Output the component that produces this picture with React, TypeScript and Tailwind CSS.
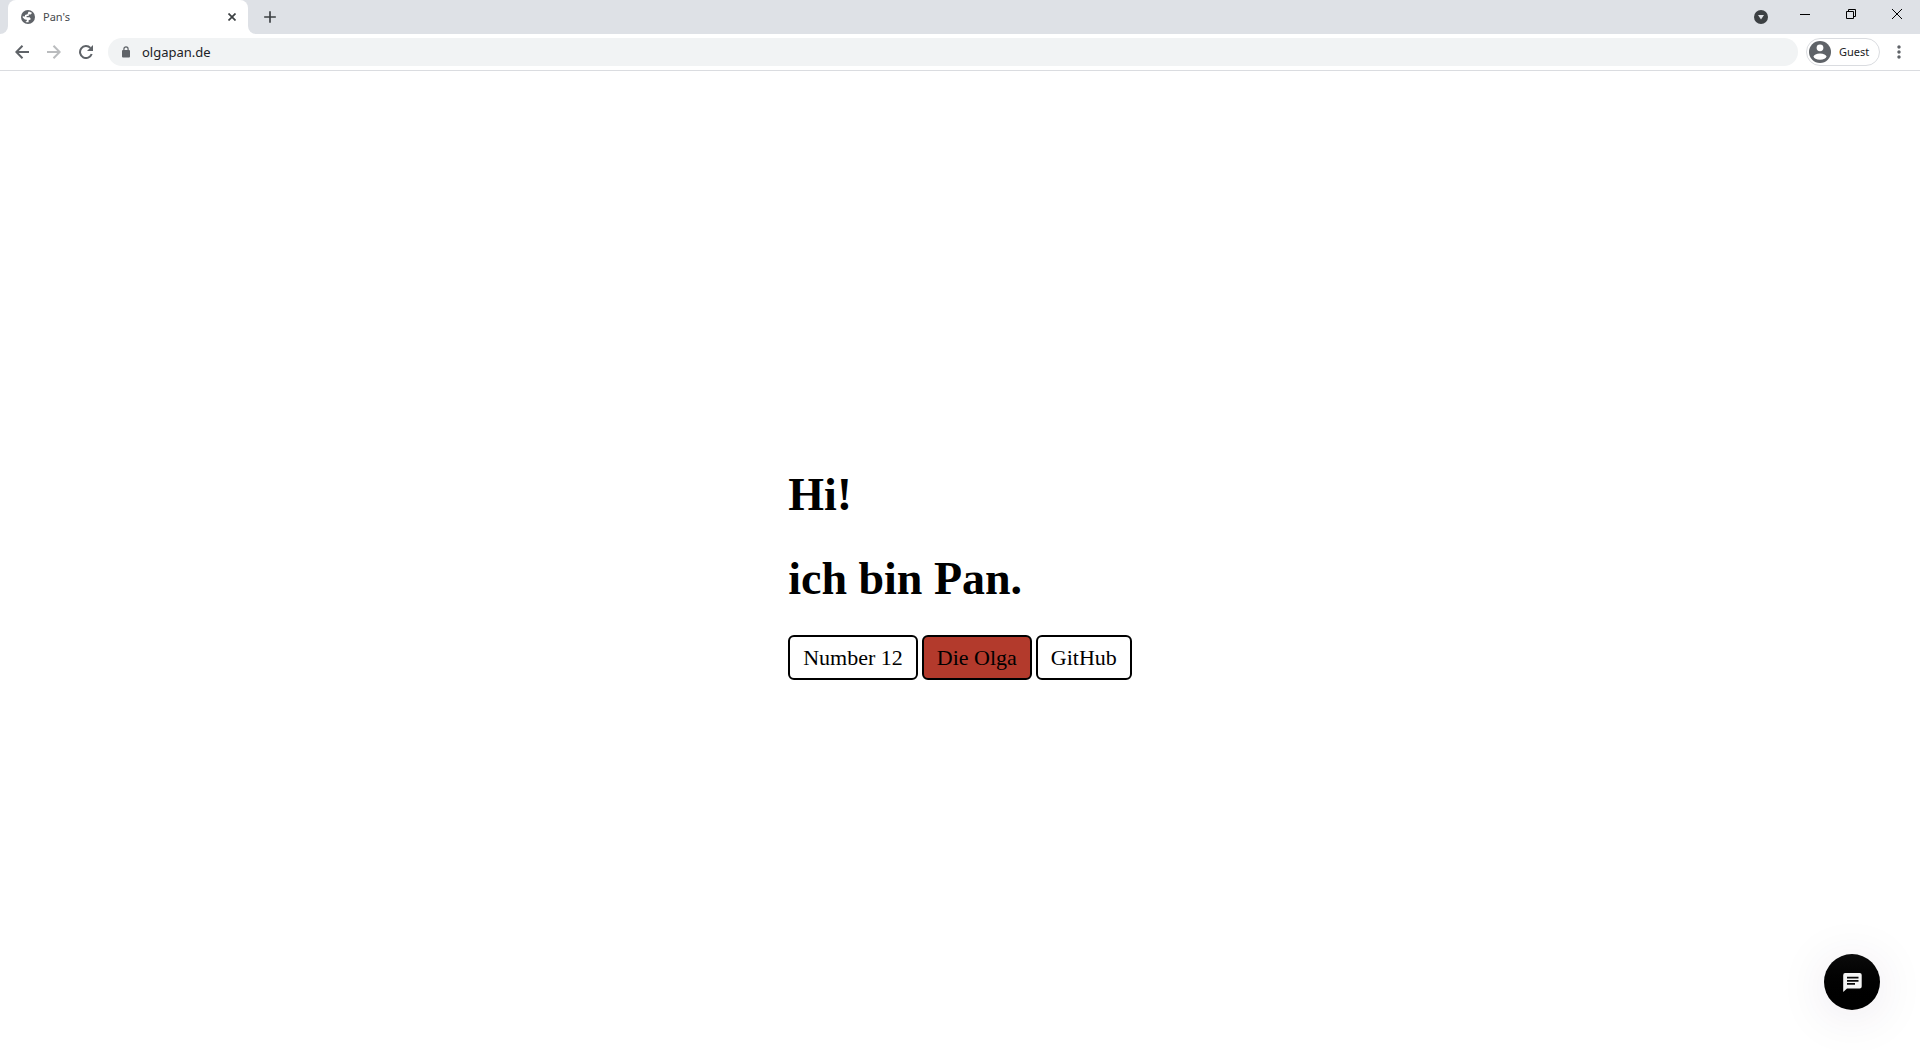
import React from "react";
import { MdAdd, MdMoreVert } from "react-icons/md";

function GlobeIcon() {
  return (
    <svg width="14" height="14" viewBox="0 0 14 14">
      <circle cx="7" cy="7" r="7" fill="#5f6368" />
      <path
        d="M7.4 1.7C9 1.6 10.3 2.3 11 3.1L9.6 4.6H7.7V6H5.6V7.2H8.6L9.6 8.4V9.6L7.6 10.2V12.2C6.4 12.5 5.2 12.2 4.4 11.7L5.8 11V9.8L3.9 9.5 1.7 7.4V6.2L4 6.6V5L6.6 4.2z"
        fill="white"
      />
    </svg>
  );
}

function AvatarIcon() {
  return (
    <svg width="22" height="22" viewBox="0 0 22 22">
      <circle cx="11" cy="11" r="11" fill="#5f6368" />
      <circle cx="11" cy="6.8" r="3.4" fill="white" />
      <ellipse cx="11" cy="15.6" rx="6.4" ry="3.1" fill="white" />
    </svg>
  );
}

function LockIcon() {
  return (
    <svg width="8" height="12" viewBox="0 0 8 12">
      <path d="M1.9 5V3a2.1 2.1 0 0 1 4.2 0v2" fill="none" stroke="#5f6368" strokeWidth="1.2" />
      <rect y="4" width="8" height="7.5" rx="1" fill="#5f6368" />
    </svg>
  );
}

function ArrowIcon({ forward = false }: { forward?: boolean }) {
  return (
    <svg width="14" height="14" viewBox="0 0 14 14" fill="none" stroke="currentColor" strokeWidth="2">
      <path d={forward ? "M0 7h12.5M6.5.7L12.7 7l-6.2 6.3" : "M14 7H1.5M7.5.7L1.3 7l6.2 6.3"} />
    </svg>
  );
}

function ReloadIcon() {
  return (
    <svg width="14" height="14" viewBox="0 0 14 14">
      <path d="M12.7 9A6 6 0 1 1 11.4 2.9" fill="none" stroke="currentColor" strokeWidth="2" />
      <path d="M14 0v6H8z" fill="currentColor" />
    </svg>
  );
}

function ChatIcon() {
  return (
    <svg width="19" height="19" viewBox="0 0 19 19">
      <path d="M2.5 0h14.2A2 2 0 0 1 18.7 2v11.5a2 2 0 0 1-2 2H4L.2 19V2.2A2.2 2.2 0 0 1 2.5 0z" fill="#f5f5f5" />
      <path d="M4 4.7h11.5M4 7.8h11.5M4 10.9h8" stroke="#0a0a0a" strokeWidth="1.7" />
    </svg>
  );
}

function TabStrip() {
  return (
    <div className="flex h-[34px] bg-white">
      <div className="w-2 rounded-br-lg bg-[#dee1e6]" />
      <div className="flex w-60 bg-[#dee1e6]">
        <div className="flex flex-1 items-center rounded-t-lg bg-white pr-1.5 pl-[13px]">
          <GlobeIcon />
          <span className="ml-2 flex-1 text-[11px] text-[#45494d]">Pan's</span>
          <button aria-label="Close tab" className="flex size-5 items-center justify-center text-[#3c4043]">
            <svg width="8" height="8" viewBox="0 0 8 8" stroke="currentColor" strokeWidth="1.7">
              <path d="M.5.5l7 7M7.5.5l-7 7" />
            </svg>
          </button>
        </div>
      </div>
      <div className="flex flex-1 items-center rounded-bl-lg bg-[#dee1e6] pl-2">
        <button aria-label="New tab" className="flex size-7 items-center justify-center text-[#3c4043]">
          <MdAdd size={20} />
        </button>
        <div className="flex-1" />
        <button aria-label="Search tabs" className="mr-[7px] flex size-7 items-center justify-center">
          <svg width="14" height="14" viewBox="0 0 14 14">
            <circle cx="7" cy="7" r="7" fill="#3c4043" />
            <path d="M4 5h6L7 9.5z" fill="#dee1e6" />
          </svg>
        </button>
        <div className="flex self-start text-black">
          <button aria-label="Minimize" className="flex h-7 w-[46px] items-center justify-center">
            <svg width="10" height="10" viewBox="0 0 10 10">
              <path d="M0 5.5h10" stroke="currentColor" />
            </svg>
          </button>
          <button aria-label="Restore" className="flex h-7 w-[46px] items-center justify-center">
            <svg width="10" height="10" viewBox="0 0 10 10" fill="none" stroke="currentColor">
              <path d="M.5 2.5h7v7h-7zM2.5 2.5v-2h7v7h-2" />
            </svg>
          </button>
          <button aria-label="Close window" className="flex h-7 w-[46px] items-center justify-center">
            <svg width="10" height="10" viewBox="0 0 10 10" stroke="currentColor">
              <path d="M0 0l10 10M10 0L0 10" />
            </svg>
          </button>
        </div>
      </div>
    </div>
  );
}

function Toolbar() {
  return (
    <div className="flex h-[37px] items-center border-b border-[#dadce0] px-1.5 text-[#5f6368]">
      <button aria-label="Back" className="flex size-8 items-center justify-center">
        <ArrowIcon />
      </button>
      <button aria-label="Forward" disabled className="flex size-8 items-center justify-center text-[#babcbe]">
        <ArrowIcon forward />
      </button>
      <button aria-label="Reload" className="flex size-8 items-center justify-center">
        <ReloadIcon />
      </button>
      <label className="mx-1.5 flex h-7 flex-1 items-center gap-3 rounded-full bg-[#f1f3f4] pl-3.5">
        <LockIcon />
        <input
          aria-label="Address"
          defaultValue="olgapan.de"
          className="h-6 flex-1 bg-transparent text-[13px] text-[#202124] outline-none"
        />
      </label>
      <button className="ml-0.5 flex h-7 w-[74px] items-center gap-2 rounded-full border border-[#dadce0] pl-0.5 text-[11px] text-[#202124]">
        <AvatarIcon />
        Guest
      </button>
      <button aria-label="Menu" className="ml-1 flex h-7 w-[30px] items-center justify-center">
        <MdMoreVert size={20} />
      </button>
    </div>
  );
}

const linkClass = "rounded-md border-2 border-black px-[13px] py-2 leading-[25px]";

export default function App() {
  return (
    <div className="flex min-h-screen flex-col bg-white font-['Noto_Sans',sans-serif]">
      <TabStrip />
      <Toolbar />
      <main className="flex flex-1 items-center justify-center font-['Liberation_Serif',serif] text-black">
        <div className="pt-7">
          <h1 className="mb-8 text-[46px] leading-[52px] font-bold">Hi!</h1>
          <h1 className="mb-[30px] text-[46px] leading-[52px] font-bold">ich bin Pan.</h1>
          <nav className="flex gap-1 text-[22px]">
            <a href="#number-12" className={linkClass}>Number 12</a>
            <a href="#die-olga" className={`${linkClass} bg-[#b33a2c]`}>Die Olga</a>
            <a href="#github" className={linkClass}>GitHub</a>
          </nav>
        </div>
      </main>
      <button
        aria-label="Open chat"
        className="fixed right-10 bottom-10 flex size-14 items-center justify-center rounded-full bg-linear-to-b from-[#0c0c0c] to-black shadow-[0_6px_50px_rgba(60,20,80,0.1)]"
      >
        <ChatIcon />
      </button>
    </div>
  );
}
